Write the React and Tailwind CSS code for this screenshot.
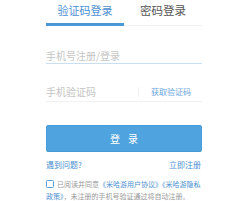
export default function App() {
  return (
    <div className="w-[251px] h-[201px] bg-white overflow-hidden" style={{ fontFamily: '"Noto Sans CJK SC", "Noto Sans", sans-serif' }}>
      <div className="ml-[46px] w-[156px]">
        {/* Tabs */}
        <div className="flex">
          <div className="w-[78px] h-[26px] border-b-[3px] border-[#4a9ad8] text-center pt-[5px] text-[11px] leading-[11px] text-[#4a8fd2]">
            验证码登录
          </div>
          <div className="w-[78px] h-[26px] flex flex-col">
            <div className="text-center pt-[5px] text-[11.5px] leading-[11px] text-[#555]">密码登录</div>
            <div className="mt-auto h-[1px] bg-[#f1f1f1]" />
          </div>
        </div>

        {/* Phone */}
        <div className="pt-[25px] pb-[2px] border-b border-[#c8def1] text-[10px] leading-[10px] text-[#c4c4c4]">
          手机号注册/登录
        </div>

        {/* Code */}
        <div className="flex items-center pt-[23px] pb-[4px] border-b border-[#f2f2f2]">
          <div className="flex-1 text-[10px] leading-[10px] text-[#c4c4c4]">手机验证码</div>
          <div className="border-l border-[#f0f0f0] pl-[12px] pr-[11px] text-[8px] leading-[10px] text-[#6aa5dc]">
            获取验证码
          </div>
        </div>

        {/* Button */}
        <button className="mt-[23px] w-full h-[27px] pl-[3px] rounded-[2px] bg-[#4fa3de] border border-[#479bd6] text-white text-[10px] leading-[10px] tracking-[3px]">
          登 录
        </button>

        {/* Links */}
        <div className="flex justify-between mt-[9px] text-[8px] leading-[8px] text-[#4a8fd0]">
          <span>遇到问题?</span>
          <span className="mr-[1px]">立即注册</span>
        </div>

        {/* Agreement */}
        <div className="mt-[9px] text-[7px] leading-[12px] text-[#999]">
          <span className="inline-block align-[-1px] w-[8px] h-[8px] border border-[#5a9ed8] rounded-[1.5px] mr-[3px]" />
          已阅读并同意<span className="text-[#4a8fd0]">《米哈游用户协议》《米哈游隐私政策》</span>，未注册的手机号验证通过将自动注册。
        </div>
      </div>
    </div>
  );
}
